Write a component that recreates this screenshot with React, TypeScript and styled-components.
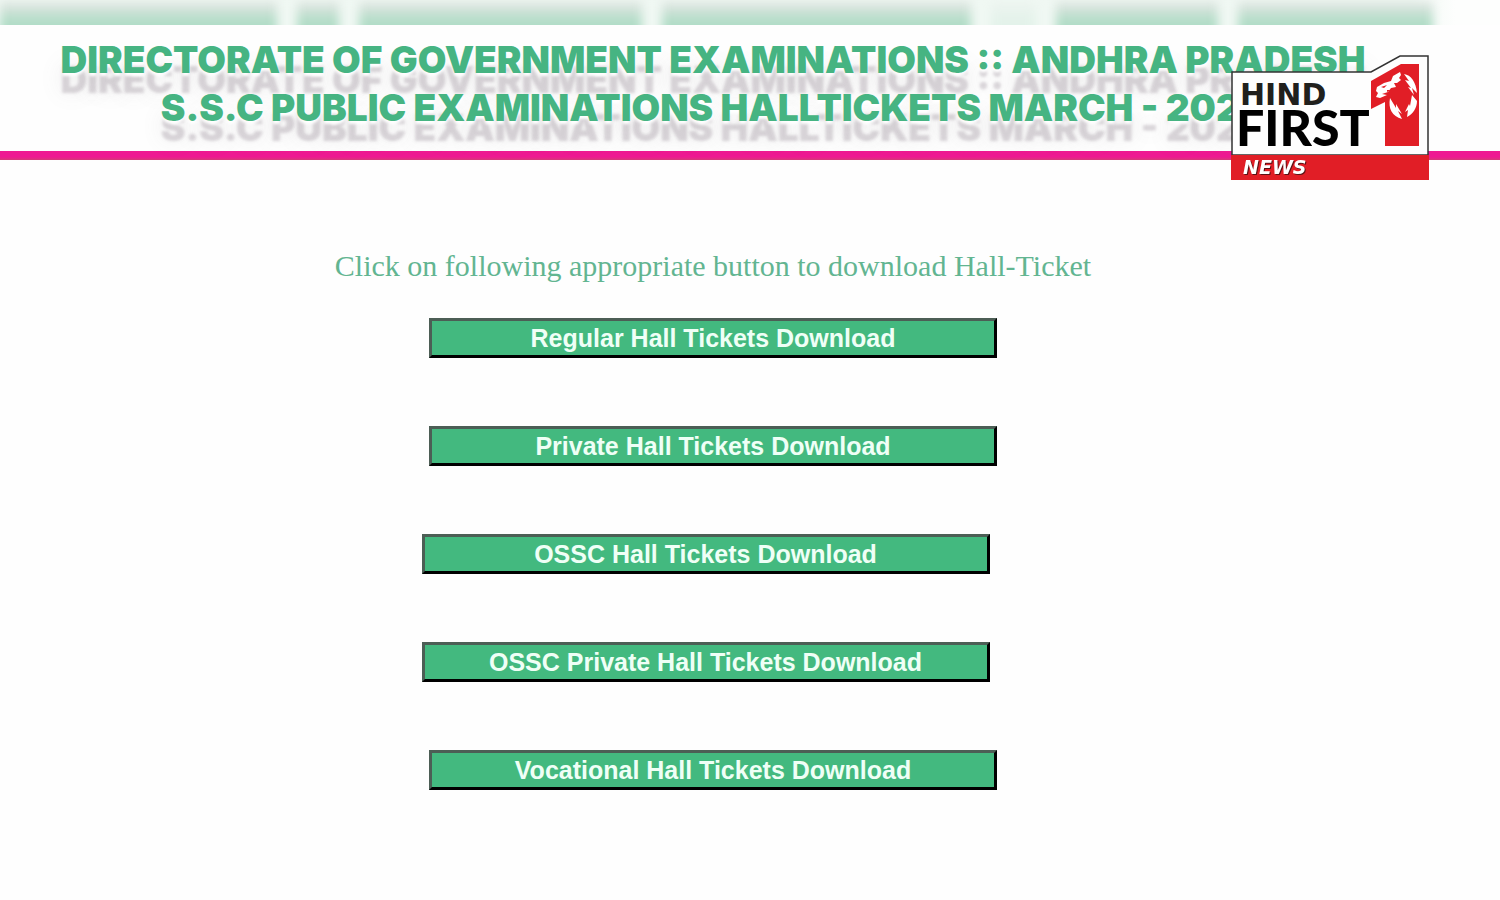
import React from "react";
import styled, { createGlobalStyle } from "styled-components";

const GlobalStyle = createGlobalStyle`
  *, *::before, *::after { box-sizing: border-box; }
  body { margin: 0; background: #fefefe; }
`;

const Page = styled.div`
  position: relative;
  min-height: 100vh;
  overflow: hidden;
`;

const Header = styled.header`
  &::after {
    content: "";
    display: block;
    height: 9px;
    background: linear-gradient(#ee1a92 0 66%, #d63a78);
  }
`;

const GlowStrip = styled.div`
  display: flex;
  gap: 20px;
  height: 25px;
  padding-right: 67px;
  overflow: hidden;
  background: linear-gradient(90deg, #f0f8f3 94%, #fdfefd 97%);
`;

const Glow = styled.span<{ $grow: number; $faint?: boolean }>`
  flex: ${(p) => p.$grow} 1 0;
  height: 40px;
  margin-top: 2px;
  background: linear-gradient(#dfe5e1 0, #d4e3db 8px, #bcdfcd 14px, #b0dcc6 24px);
  opacity: ${(p) => (p.$faint ? 0.2 : 1)};
  filter: blur(5px);
`;

const Title = styled.h1`
  margin: 0;
  padding: 11px 74px 0 0;
  height: 126px;
  font: 900 37px/48px Inter, "Liberation Sans", sans-serif;
  text-align: center;
  color: #46b482;
  text-shadow: 0 3px 3px #fff, 0 20px 3px rgba(120, 105, 120, 0.26), 0 19px 22px rgba(120, 110, 120, 0.14);
`;

const TitleLine = styled.span`
  display: block;
  white-space: nowrap;
`;

const Main = styled.main`
  display: flex;
  flex-direction: column;
  align-items: center;
  padding: 88px 74px 40px 0;
`;

const Prompt = styled.p`
  margin: 0;
  font: 30px/36px "Liberation Serif", serif;
  color: #62b591;
`;

const Downloads = styled.div`
  display: flex;
  flex-direction: column;
  align-items: center;
  gap: 68px;
  margin-top: 34px;
`;

const DownloadButton = styled.button<{ $trailing?: boolean }>`
  width: 568px;
  height: 40px;
  padding: 0;
  margin-right: ${(p) => (p.$trailing ? 15 : 0)}px;
  border: 3px solid;
  border-color: #4c5e55 #000 #000 #4c5e55;
  border-radius: 0;
  background: #43b97f;
  color: #effff6;
  font: bold 25px/34px "Liberation Sans", sans-serif;
  cursor: pointer;
`;

const ChannelLogo = styled.svg`
  position: absolute;
  top: 55px;
  right: 71px;
  width: 198px;
  height: 125px;
`;

const HindText = styled.text`
  font: bold 30px "DejaVu Sans", sans-serif;
  fill: #20201d;
`;

const FirstText = styled.text`
  font: 900 50px Lato, sans-serif;
  fill: #000;
`;

const NewsText = styled.text`
  font: italic bold 19px "DejaVu Sans", sans-serif;
  fill: #fff;
  filter: drop-shadow(1px 1px 0 #5a1215);
`;

const words = [278, 42, 285, 310, 45, 163, 196];

const downloads = [
  { label: "Regular Hall Tickets Download" },
  { label: "Private Hall Tickets Download" },
  { label: "OSSC Hall Tickets Download", trailing: true },
  { label: "OSSC Private Hall Tickets Download", trailing: true },
  { label: "Vocational Hall Tickets Download" },
];

function HindFirstLogo() {
  return (
    <ChannelLogo viewBox="0 0 198 125" role="img" aria-label="Hind First News">
      <path d="M1 17H140L169 1H197V100H1Z" fill="#fefefe" stroke="#333" strokeWidth="1.5" />
      <path d="M0 100H198V125H0Z" fill="#e11e26" />
      <path d="M140 26L170 9H188V91H154V47L140 54Z" fill="#e11e26" />
      <path d="M146 32L153 28L160 26L162 21L169 17L170 20L168 23L170 25L166 28L163 28L165 32L160 33L157 37L151 39L156 40L149 43L145 42L147 38L145 36Z" fill="#fff" />
      <path d="M150 32l6-2-3 3zM156 35l4 0-4 2z" fill="#e11e26" />
      <path d="M173 19C180 20 185 27 186 38L181 33L183 40L177 32L180 33L174 25L178 26Z" fill="#fff" />
      <path d="M159 43C157 54 161 61 171 64L167 56L171 59L165 49L165 53Z" fill="#fff" />
      <path d="M181 40L186 46C186 53 182 59 176 62L177 55L174 57L178 49L179 51Z" fill="#fff" />
      <HindText x="9" y="50">HIND</HindText>
      <FirstText x="5" y="91">FIRST</FirstText>
      <NewsText x="12" y="119">NEWS</NewsText>
    </ChannelLogo>
  );
}

export default function App() {
  return (
    <>
      <GlobalStyle />
      <Page>
        <Header>
          <GlowStrip aria-hidden="true">
            {words.map((width, i) => (
              <Glow key={i} $grow={width} $faint={i === 4} />
            ))}
          </GlowStrip>
          <Title>
            <TitleLine>DIRECTORATE OF GOVERNMENT EXAMINATIONS :: ANDHRA PRADESH</TitleLine>
            <TitleLine>S.S.C PUBLIC EXAMINATIONS HALLTICKETS MARCH - 2024</TitleLine>
          </Title>
        </Header>
        <HindFirstLogo />
        <Main>
          <Prompt>Click on following appropriate button to download Hall-Ticket</Prompt>
          <Downloads>
            {downloads.map((d) => (
              <DownloadButton key={d.label} type="button" $trailing={d.trailing}>
                {d.label}
              </DownloadButton>
            ))}
          </Downloads>
        </Main>
      </Page>
    </>
  );
}
